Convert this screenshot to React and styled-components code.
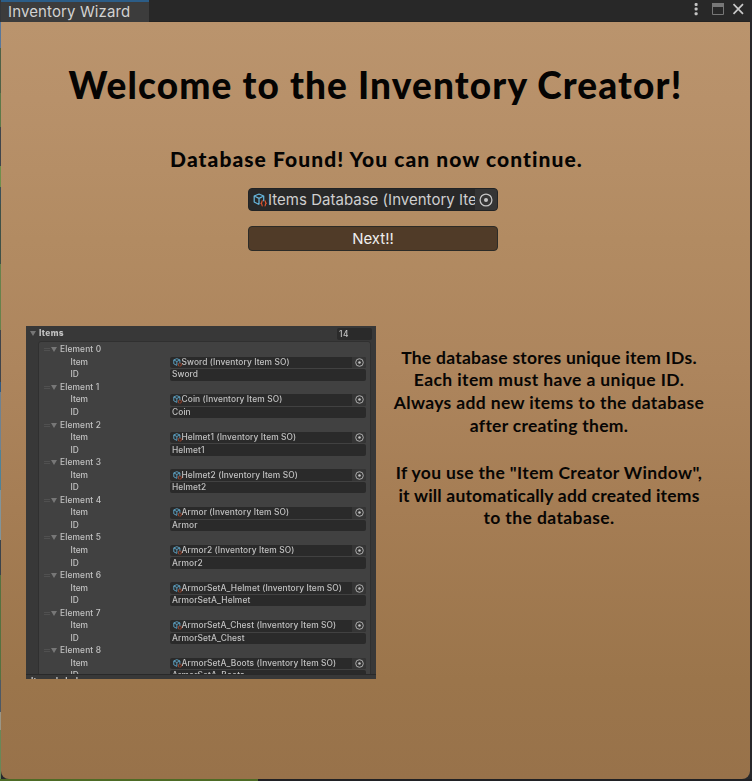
import React from 'react';
import styled, { createGlobalStyle } from 'styled-components';

const Global = createGlobalStyle`
  * { box-sizing: border-box; }
  body { margin: 0; overflow: hidden; background: #202124; }
`;

const Desktop = styled.div`
  width: 752px;
  height: 781px;
  padding: 0 2px 2px 1px;
  background:
    linear-gradient(90deg, #4d6b25 0 258px, #202124 258px) 0 779px / 752px 2px no-repeat,
    linear-gradient(180deg, #33363a 0 22px, #58779b 22px 48px, #4f6146 48px 93px, #5d7948 93px 127px,
      #40454b 127px 166px, #6f8f4b 166px 187px, #3b5058 187px 204px, #3f5147 204px 264px, #67824b 264px 330px,
      #40444a 330px 382px, #315a83 382px 392px, #6f8291 392px 450px, #4f8298 450px 490px, #81949a 490px 540px,
      #3b434b 540px 575px, #557240 575px 680px, #4d5965 680px 712px, #9a9686 712px 730px, #688857 730px 781px)
      0 0 / 1px 781px no-repeat,
    #27282b;
`;

const Window = styled.main`
  width: 749px;
  height: 779px;
  display: flex;
  flex-direction: column;
  align-items: center;
  border-radius: 0 0 8px 8px;
  overflow: hidden;
  background: linear-gradient(180deg, #ba946d 22px, #b8916a 100px, #b28b62 240px, #ad855d 370px, #a57d54 510px, #9b754b 680px, #98724a 779px);
`;

const TitleBar = styled.header`
  width: 100%;
  height: 22px;
  display: flex;
  justify-content: space-between;
  background: #282828;
  border-bottom: 1px solid #242322;
  flex: none;
`;

const Tab = styled.div`
  width: 148px;
  height: 22px;
  padding-left: 7px;
  border-top: 2px solid #2c5d87;
  background: #3c3c3c;
  color: #d2d2d2;
  font: 400 15px/20px Inter, sans-serif;
  letter-spacing: 0.12px;
  white-space: nowrap;
`;

const WindowControls = styled.svg`
  width: 60px;
  height: 21px;
  display: block;
`;

const Heading = styled.h1`
  margin: 39px 0 0;
  height: 48px;
  color: #050403;
  font: 900 37px/48px Lato, sans-serif;
  letter-spacing: ${(p) => p.$track}px;
  white-space: nowrap;
`;

const Status = styled.h2`
  margin: 36px 0 0 2px;
  height: 28px;
  color: #050403;
  font: 900 21px/28px Lato, sans-serif;
  letter-spacing: ${(p) => p.$track}px;
  white-space: nowrap;
`;

const Controls = styled.section`
  width: 250px;
  margin: 15px 5px 0 0;
  display: flex;
  flex-direction: column;
  gap: 15px;
`;

const ObjectField = styled.div`
  height: 23px;
  display: flex;
  align-items: center;
  padding-left: 4px;
  border: 1px solid #212325;
  border-radius: 4px;
  background: #282828;
  overflow: hidden;
`;

const FieldText = styled.span`
  flex: 1;
  min-width: 0;
  padding-left: 1px;
  overflow: hidden;
  color: #cfcfcf;
  font: 400 15px/23px Inter, sans-serif;
  letter-spacing: 0.02px;
  white-space: nowrap;
`;

const Picker = styled.span`
  width: 22px;
  height: 21px;
  display: flex;
  align-items: center;
  justify-content: center;
  background: #353535;
`;

const NextButton = styled.button`
  height: 25px;
  padding: 0;
  border: 1px solid #2c2b27;
  border-radius: 4px;
  background: #503b28;
  color: #eee;
  font: 400 15px/23px Inter, sans-serif;
`;

const Content = styled.section`
  width: 100%;
  margin-top: 75px;
  padding-left: 25px;
  display: flex;
`;

const Inspector = styled.div`
  width: 350px;
  height: 353px;
  overflow: hidden;
  flex: none;
  display: flex;
  flex-direction: column;
  background: #383838;
  color: #c2c2c2;
  font: 500 8.4px/11px Inter, sans-serif;
`;

const Soft = styled.div`
  filter: blur(0.4px);
  height: 348px;
  overflow: hidden;
  flex: none;
`;

const ListHeader = styled.div`
  height: 15px;
  display: flex;
  align-items: center;
  padding: 0 4px 0 4px;
`;

const Caret = styled.svg`
  width: 6px;
  height: 5px;
  margin-right: ${(p) => p.$gap}px;
  flex: none;
`;

const ListTitle = styled.strong`
  flex: 1;
  font-weight: 800;
  letter-spacing: 0.35px;
`;

const Count = styled.span`
  width: 35px;
  height: 12px;
  padding-left: 2px;
  border-radius: 2px;
  background: #2a2a2a;
  line-height: 12px;
  letter-spacing: 0.6px;
`;

const List = styled.div`
  width: 333px;
  height: 345px;
  margin-left: 12px;
  padding: 1.5px 4px 0 5px;
  border: 1px solid #303030;
  border-radius: 3px;
  background: #414141;
`;

const Element = styled.div`
  height: 37.65px;
`;

const ElementTitle = styled.div`
  height: 12.5px;
  display: flex;
  align-items: center;
  letter-spacing: 0.14px;
`;

const Grip = styled.span`
  width: 6px;
  height: 3px;
  margin-right: 1px;
  border: solid #505050;
  border-width: 1px 0;
`;

const Property = styled.div`
  height: 12.55px;
  display: grid;
  grid-template-columns: 99.5px 196px;
  align-items: center;
  padding-left: 26.5px;
`;

const Value = styled.div`
  height: 11.5px;
  display: flex;
  align-items: center;
  padding-left: ${(p) => (p.$object ? 2.5 : 2)}px;
  border-radius: 2px;
  background: #2a2a2a;
  white-space: nowrap;
  letter-spacing: 0.1px;
  overflow: hidden;
`;

const Grow = styled.span`
  flex: 1;
`;

const SmallPicker = styled(Picker)`
  width: 14px;
  height: 12px;
`;

const Footer = styled.div`
  height: 5px;
  padding-left: 5px;
  border-top: 1px solid #292929;
  overflow: hidden;
  line-height: 13px;
  font-weight: 700;
  filter: blur(0.4px);
`;

const Help = styled.div`
  flex: 1;
  padding: 20.6px 36px 0 8px;
  text-align: center;
  color: #080604;
`;

const Paragraph = styled.p`
  margin: 0 0 24.5px;
  font: 700 17.5px/22.7px Lato, sans-serif;
`;

const Line = styled.span`
  display: block;
  white-space: nowrap;
  letter-spacing: ${(p) => p.$track}px;
`;

const CubeIcon = ({ size }) => (
  <svg width={size} height={size} viewBox="0 0 14 14" fill="none">
    <path d="M6 1 10.7 3v5.3M6 1 1.2 3v6L6 11.5M1.2 3 6 5.4 10.7 3M6 5.4v6" stroke="#65b5dc" strokeWidth="1.25" strokeLinejoin="round" />
    <path d="M9.7 7.7c-1.2 0-.5 2-1.5 2.5 1 .5.3 2.8 1.5 2.8M11.6 7.7c1.2 0 .5 2 1.5 2.5-1 .5-.3 2.8-1.5 2.8" stroke="#e0532f" strokeWidth="1.2" />
  </svg>
);

const TargetIcon = ({ size }) => (
  <svg width={size} height={size} viewBox="0 0 14 14">
    <circle cx="7" cy="7" r="5.9" fill="none" stroke="#c4c4c4" strokeWidth="1.3" />
    <circle cx="7" cy="7" r="2" fill="#c4c4c4" />
  </svg>
);

const Arrow = ({ gap }) => (
  <Caret viewBox="0 0 6 5" $gap={gap}>
    <path d="M0 0h6L3 5z" fill="#777" />
  </Caret>
);

const items = ['Sword', 'Coin', 'Helmet1', 'Helmet2', 'Armor', 'Armor2', 'ArmorSetA_Helmet', 'ArmorSetA_Chest', 'ArmorSetA_Boots'];

const paragraphs = [
  [
    ['The database stores unique item IDs.', 0.25],
    ['Each item must have a unique ID.', 0.4],
    ['Always add new items to the database', 0.36],
    ['after creating them.', 0.27],
  ],
  [
    ['If you use the "Item Creator Window",', 0.34],
    ['it will automatically add created items', 0.2],
    ['to the database.', 0.4],
  ],
];

export default function App() {
  return (
    <Desktop>
      <Global />
      <Window>
        <TitleBar>
          <Tab>Inventory Wizard</Tab>
          <WindowControls viewBox="0 0 60 21">
            <g fill="#c4c4c4">
              <rect x="4.6" y="3" width="3" height="3" rx="1" />
              <rect x="4.6" y="7.6" width="3" height="3" rx="1" />
              <rect x="4.6" y="12.2" width="3" height="3" rx="1" />
            </g>
            <path d="M22.5 3.5h11v11h-11z" fill="none" stroke="#777" />
            <path d="M22 3h12v4H22z" fill="#777" />
            <path d="m43.5 4.2 9.5 9.6m0-9.6-9.5 9.6" stroke="#c8c8c8" strokeWidth="1.7" />
          </WindowControls>
        </TitleBar>
        <Heading $track={1.14}>Welcome to the Inventory Creator!</Heading>
        <Status $track={1.07}>Database Found! You can now continue.</Status>
        <Controls>
          <ObjectField>
            <CubeIcon size={14} />
            <FieldText>Items Database (Inventory Item Database)</FieldText>
            <Picker><TargetIcon size={14} /></Picker>
          </ObjectField>
          <NextButton>Next!!</NextButton>
        </Controls>
        <Content>
          <Inspector>
            <Soft>
              <ListHeader>
                <Arrow gap={3} />
                <ListTitle>Items</ListTitle>
                <Count>14</Count>
              </ListHeader>
              <List>
                {items.map((name, index) => (
                  <Element key={name}>
                    <ElementTitle><Grip /><Arrow gap={3} />Element {index}</ElementTitle>
                    <Property>
                      Item
                      <Value $object>
                        <CubeIcon size={9} />
                        <Grow>{name} (Inventory Item SO)</Grow>
                        <SmallPicker><TargetIcon size={9} /></SmallPicker>
                      </Value>
                    </Property>
                    <Property>ID<Value>{name}</Value></Property>
                  </Element>
                ))}
              </List>
            </Soft>
            <Footer>Items Labels</Footer>
          </Inspector>
          <Help>
            {paragraphs.map((lines, index) => (
              <Paragraph key={index}>
                {lines.map(([text, track]) => <Line key={text} $track={track}>{text}</Line>)}
              </Paragraph>
            ))}
          </Help>
        </Content>
      </Window>
    </Desktop>
  );
}
